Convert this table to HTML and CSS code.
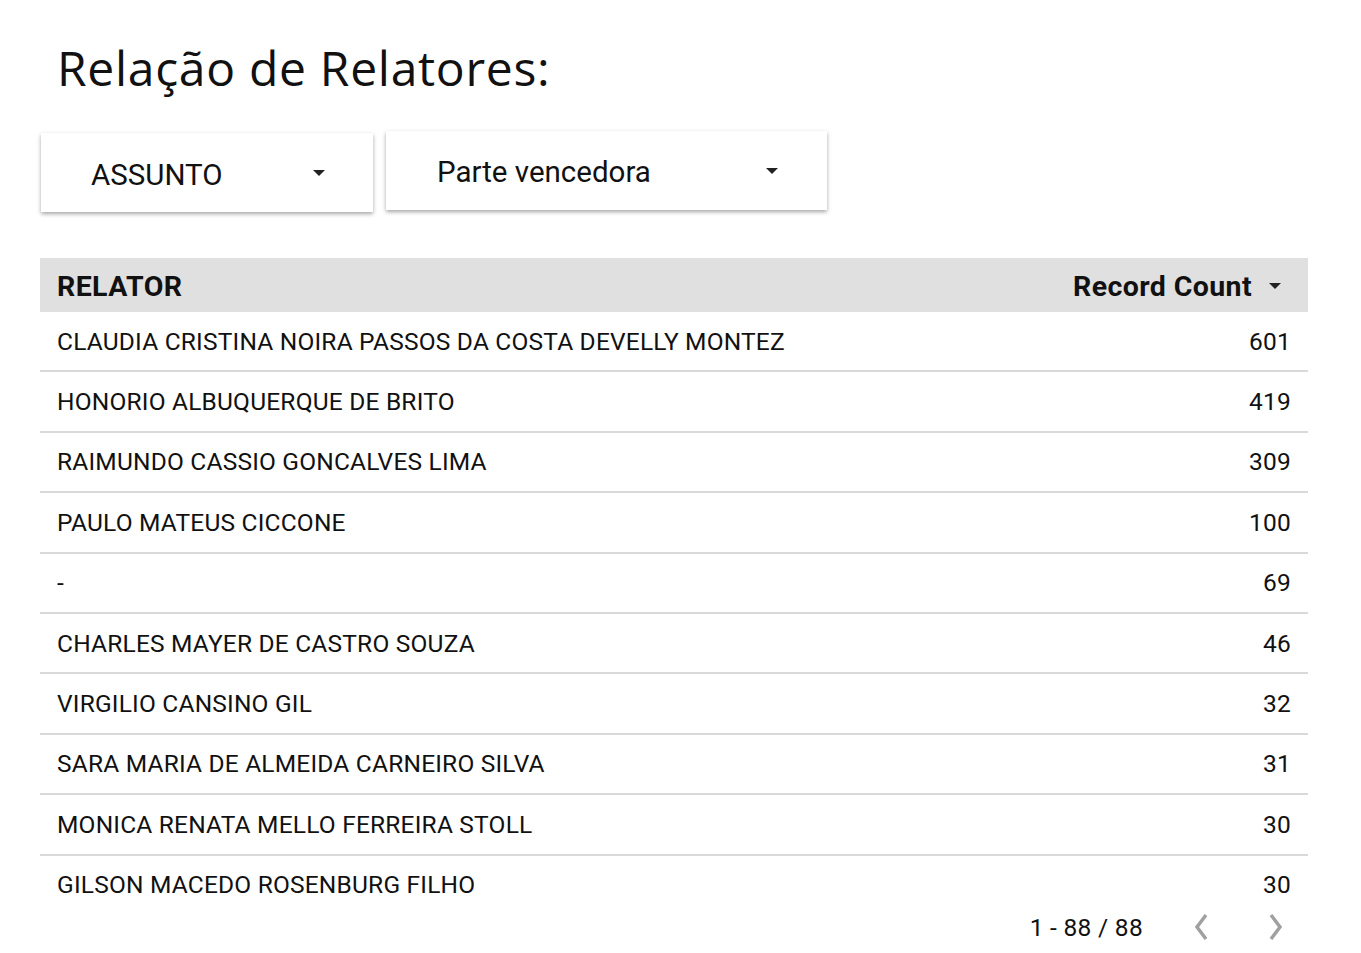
FILE: index.html
```html
<!DOCTYPE html>
<html lang="pt">
<head>
<meta charset="utf-8">
<title>Relação de Relatores</title>
<link rel="stylesheet" href="styles.css">
</head>
<body>
<div class="page">
  <h1 class="title">Relação de Relatores:</h1>
  <div class="filters">
    <div class="dropdown dd-assunto">
      <span class="dd-label">ASSUNTO</span>
      <span class="caret"></span>
    </div>
    <div class="dropdown dd-parte">
      <span class="dd-label">Parte vencedora</span>
      <span class="caret"></span>
    </div>
  </div>
  <div class="table">
    <div class="thead">
      <div class="th th-name">RELATOR</div>
      <div class="th th-count">Record Count <span class="caret caret-sm"></span></div>
    </div>
    <div class="tbody">
      <div class="row"><span class="name">CLAUDIA CRISTINA NOIRA PASSOS DA COSTA DEVELLY MONTEZ</span><span class="count">601</span></div>
      <div class="row"><span class="name">HONORIO ALBUQUERQUE DE BRITO</span><span class="count">419</span></div>
      <div class="row"><span class="name">RAIMUNDO CASSIO GONCALVES LIMA</span><span class="count">309</span></div>
      <div class="row"><span class="name">PAULO MATEUS CICCONE</span><span class="count">100</span></div>
      <div class="row"><span class="name">-</span><span class="count">69</span></div>
      <div class="row"><span class="name">CHARLES MAYER DE CASTRO SOUZA</span><span class="count">46</span></div>
      <div class="row"><span class="name">VIRGILIO CANSINO GIL</span><span class="count">32</span></div>
      <div class="row"><span class="name">SARA MARIA DE ALMEIDA CARNEIRO SILVA</span><span class="count">31</span></div>
      <div class="row"><span class="name">MONICA RENATA MELLO FERREIRA STOLL</span><span class="count">30</span></div>
      <div class="row"><span class="name">GILSON MACEDO ROSENBURG FILHO</span><span class="count">30</span></div>
    </div>
    <div class="pager">
      <span class="pager-text">1 - 88 / 88</span>
      <svg class="chev" width="14" height="28" viewBox="0 0 14 28"><path d="M12 2 L3 14 L12 26" fill="none" stroke="#a0a0a0" stroke-width="3.5"/></svg>
      <svg class="chev" width="14" height="28" viewBox="0 0 14 28"><path d="M2 2 L11 14 L2 26" fill="none" stroke="#a0a0a0" stroke-width="3.5"/></svg>
    </div>
  </div>
</div>
</body>
</html>
```
FILE: styles.css
```css
html, body {
  margin: 0;
  padding: 0;
  background: #ffffff;
}
body {
  font-family: Roboto, "Liberation Sans", sans-serif;
  color: #000;
}
.page {
  width: 1361px;
  height: 953px;
  overflow: hidden;
}
.title {
  font-family: "Open Sans", "DejaVu Sans", sans-serif;
  font-weight: 400;
  font-size: 48px;
  line-height: 60px;
  margin: 38px 0 0 57px;
  letter-spacing: 0.7px;
  color: #111;
}
.filters {
  display: flex;
  align-items: flex-start;
  gap: 13px;
  margin: 33px 0 0 41px;
}
.dropdown {
  display: flex;
  align-items: center;
  background: #fff;
  box-shadow: 0 2px 4px rgba(0,0,0,0.35);
  box-sizing: border-box;
}
.dd-assunto {
  width: 332px;
  height: 79px;
  margin-top: 2px;
  padding: 0 48px 0 50px;
}
.dd-parte {
  width: 441px;
  height: 79px;
  padding: 0 49px 0 51px;
}
.dd-label {
  flex: 1;
  font-size: 29.5px;
  color: #111;
}
.dd-assunto .dd-label { padding-top: 4px; }
.dd-parte .dd-label { padding-top: 2px; }
.caret {
  width: 0;
  height: 0;
  border-left: 6px solid transparent;
  border-right: 6px solid transparent;
  border-top: 6px solid #222;
}
.table {
  margin: 46px 0 0 40px;
  width: 1268px;
}
.thead {
  display: flex;
  align-items: center;
  justify-content: space-between;
  height: 54px;
  background: #e0e0e0;
  padding: 0 27px 0 17px;
  font-weight: 700;
  font-size: 28.5px;
  letter-spacing: 0.4px;
  color: #111;
}
.th { padding-top: 2px; }
.th-count {
  display: flex;
  align-items: center;
  gap: 17px;
}
.tbody {
  height: 593px;
  overflow: hidden;
}
.row {
  display: flex;
  justify-content: space-between;
  align-items: center;
  height: 58.4px;
  border-bottom: 2px solid #d9d9d9;
  padding: 0 17px 0 17px;
  font-size: 24.5px;
  letter-spacing: 0.2px;
  color: #111;
}
.pager {
  display: flex;
  align-items: center;
  justify-content: flex-end;
  height: 44px;
  padding-right: 25px;
  font-size: 24.5px;
  letter-spacing: 0.3px;
  color: #111;
}
.pager-text {
  margin-right: 51px;
}
.chev + .chev {
  margin-left: 61px;
}
```
